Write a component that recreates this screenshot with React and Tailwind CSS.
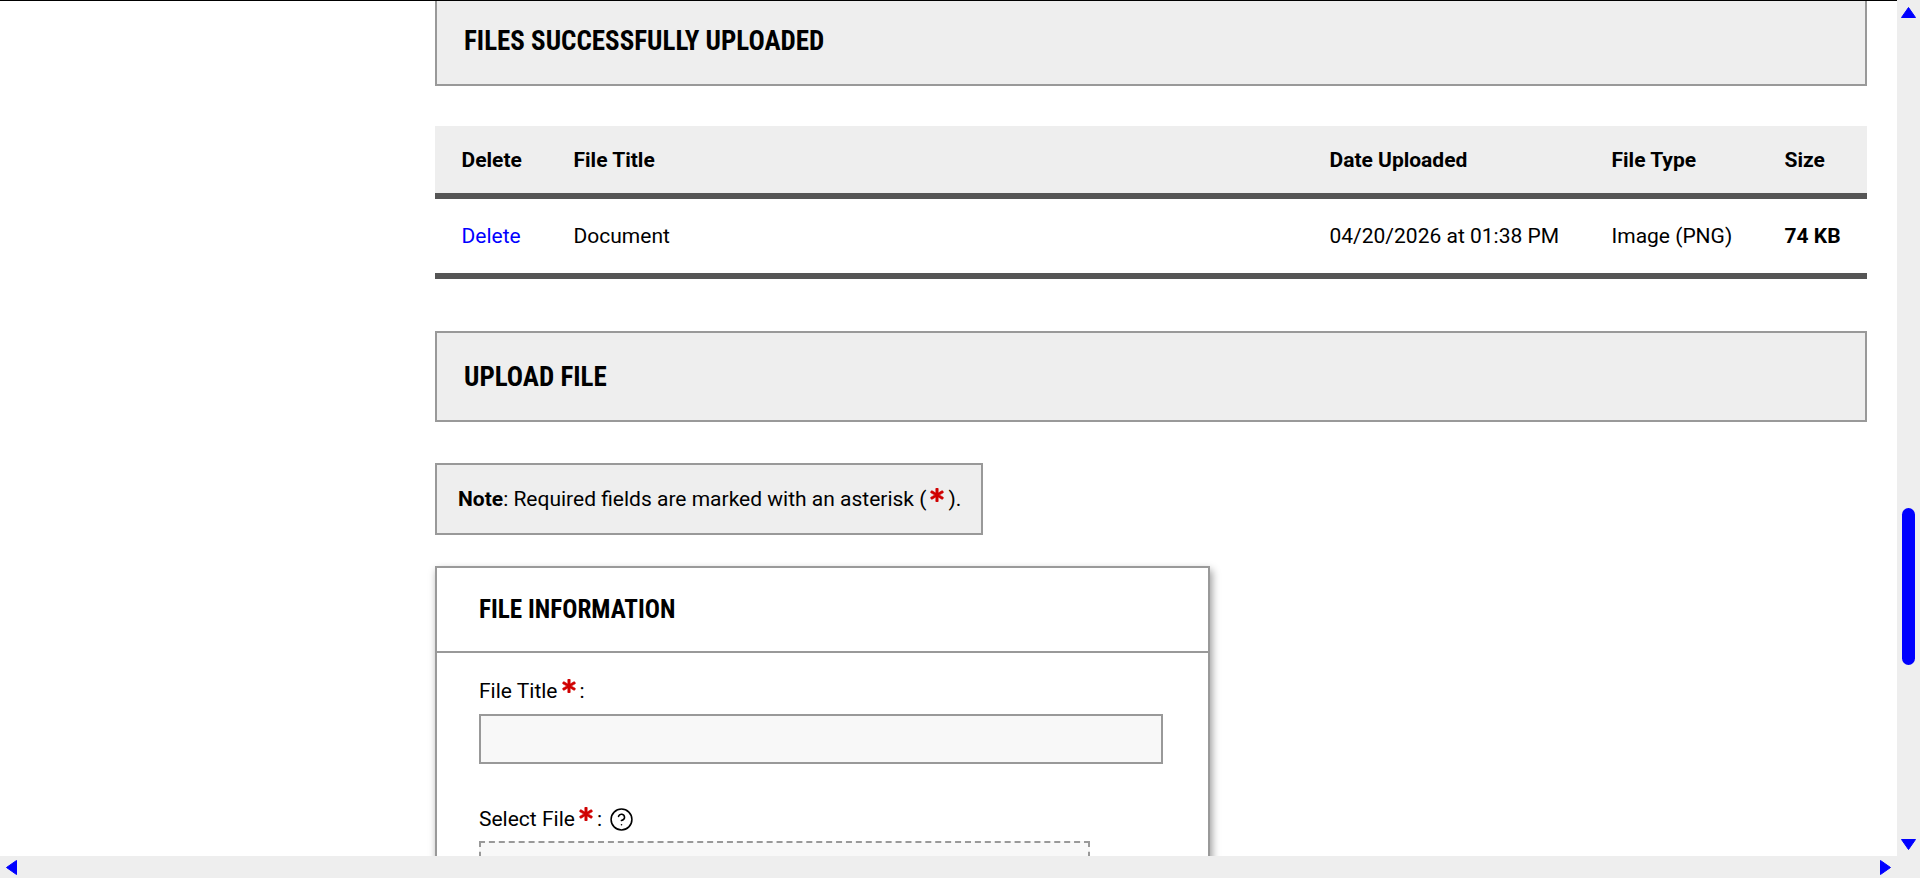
import React from 'react';
import { FaAsterisk } from 'react-icons/fa';

function Asterisk() {
  return <FaAsterisk className="relative -top-[6px] mx-[4px] inline-block text-[#d00000]" size={14} stroke="currentColor" strokeWidth={24} />;
}

function SectionTitle({ children }) {
  return (
    <h2 className="text-[27px] leading-[32px] font-bold uppercase text-black [font-stretch:75%]">{children}</h2>
  );
}

function Files() {
  return (
    <table className="mt-[40px] w-full table-fixed border-collapse text-left text-[21px] leading-[26px]">
      <colgroup>
        <col className="w-[112px]" />
        <col className="w-[756px]" />
        <col className="w-[282px]" />
        <col className="w-[173px]" />
        <col className="w-[109px]" />
      </colgroup>
      <thead>
        <tr className="h-[70px] border-b-[6px] border-[#555] bg-[#eee] font-bold">
          <th className="pl-[26.5px]">Delete</th>
          <th className="pl-[26.5px]">File Title</th>
          <th className="pl-[26.5px]">Date Uploaded</th>
          <th className="pl-[26.5px]">File Type</th>
          <th className="pl-[26.5px]">Size</th>
        </tr>
      </thead>
      <tbody>
        <tr className="h-[80px] border-b-[6px] border-[#555]">
          <td className="pl-[26.5px]"><a href="#" className="text-[#0000ff]">Delete</a></td>
          <td className="pl-[26.5px]">Document</td>
          <td className="pl-[26.5px]">04/20/2026 at 01:38 PM</td>
          <td className="pl-[26.5px]">Image (PNG)</td>
          <td className="pl-[26.5px] font-bold">74 KB</td>
        </tr>
      </tbody>
    </table>
  );
}

function FileInfo() {
  return (
    <div className="mt-[31px] w-[775px] border-2 border-[#999] bg-white shadow-[2px_4px_8px_rgba(0,0,0,0.4)]">
      <div className="flex h-[85px] items-center border-b-2 border-[#999] pl-[42px]">
        <h3 className="text-[25.2px] leading-[32px] font-bold uppercase text-black [font-stretch:75%]">File Information</h3>
      </div>
      <div className="pl-[42px] pt-[25px] text-[21px] leading-[26px]">
        <label className="block">File Title<Asterisk />:</label>
        <input className="mt-[10px] block h-[50px] w-[684px] border-2 border-[#999] bg-[#f8f8f8]" />
        <div className="mt-[42px] flex items-center">
          <label>Select File<Asterisk />:</label>
          <svg className="ml-[7px]" width="25" height="25" viewBox="0 0 24 24" fill="none" stroke="#000" strokeWidth="1.5" strokeLinecap="round" strokeLinejoin="round">
            <circle cx="12" cy="12" r="10" />
            <path d="M9.09 9a3 3 0 0 1 5.83 1c0 2-3 3-3 3" />
            <path d="M12 17h.01" />
          </svg>
        </div>
        <div className="mt-[9px] h-[60px] w-[611px] border-2 border-dashed border-[#999] bg-[#f8f8f8]" />
      </div>
    </div>
  );
}

export default function App() {
  return (
    <div className="flex h-screen w-full flex-col overflow-hidden bg-white font-['Roboto',sans-serif] text-black">
      <div className="flex min-h-0 flex-1">
        <main className="min-w-0 flex-1 overflow-hidden border-t border-black pl-[435px] pr-[30px]">
          <div className="-mt-[6px] flex h-[91px] items-center border-2 border-[#999] bg-[#eee] pl-[27px]">
            <SectionTitle>Files Successfully Uploaded</SectionTitle>
          </div>
          <Files />
          <div className="mt-[52px] flex h-[91px] items-center border-2 border-[#999] bg-[#eee] pl-[27px]">
            <SectionTitle>Upload File</SectionTitle>
          </div>
          <p className="mt-[41px] flex h-[72px] w-[548px] items-center border-2 border-[#999] bg-[#eee] pl-[21px] pt-[2px] text-[21px]">
            <span><b>Note</b>: Required fields are marked with an asterisk (<Asterisk />).</span>
          </p>
          <FileInfo />
        </main>
        <div className="relative w-[23px] shrink-0 bg-[#eee]">
          <svg className="mx-auto mt-[7px]" width="15" height="11" viewBox="0 0 15 11"><path d="M7.5 0.5 L14.5 10.5 H0.5 Z" fill="#0000ff" stroke="#0000ff" strokeLinejoin="round" /></svg>
          <div className="absolute left-[5px] top-[508px] h-[157px] w-[13px] rounded-full bg-[#0000ff]" />
          <svg className="absolute bottom-[6px] left-[4px]" width="15" height="11" viewBox="0 0 15 11"><path d="M0.5 0.5 H14.5 L7.5 10.5 Z" fill="#0000ff" stroke="#0000ff" strokeLinejoin="round" /></svg>
        </div>
      </div>
      <div className="flex h-[22px] shrink-0 items-center justify-between bg-[#eee] pl-[6px] pr-[29px]">
        <svg width="11" height="15" viewBox="0 0 11 15"><path d="M10.5 0.5 V14.5 L0.5 7.5 Z" fill="#0000ff" stroke="#0000ff" strokeLinejoin="round" /></svg>
        <svg width="11" height="15" viewBox="0 0 11 15"><path d="M0.5 0.5 V14.5 L10.5 7.5 Z" fill="#0000ff" stroke="#0000ff" strokeLinejoin="round" /></svg>
      </div>
    </div>
  );
}
